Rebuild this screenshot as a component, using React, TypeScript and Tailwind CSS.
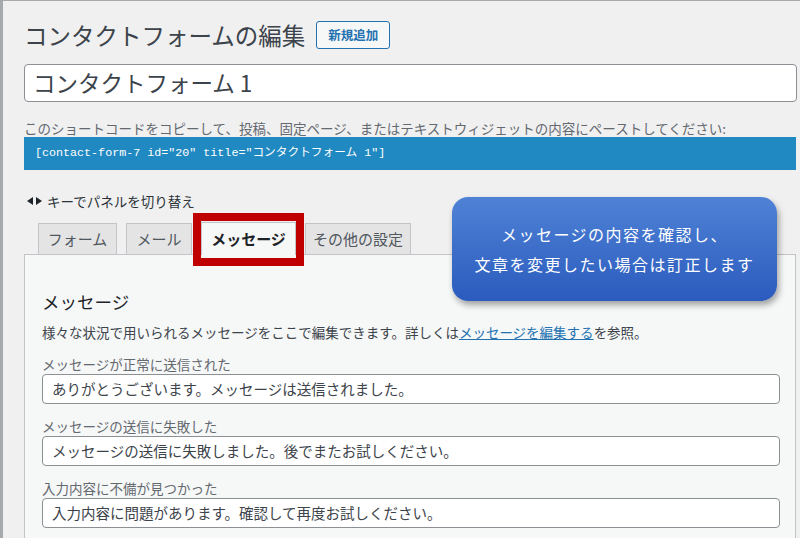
const jp = { fontFamily: '"Noto Sans CJK JP", sans-serif' }

const fields = [
  { label: 'メッセージが正常に送信された', value: 'ありがとうございます。メッセージは送信されました。' },
  { label: 'メッセージの送信に失敗した', value: 'メッセージの送信に失敗しました。後でまたお試しください。' },
  { label: '入力内容に不備が見つかった', value: '入力内容に問題があります。確認して再度お試しください。' },
]

function Tab({ label, w, active }: { label: string; w: string; active?: boolean }) {
  if (active) {
    return (
      <div className={`relative z-10 flex h-[33px] ${w} items-center justify-center border border-b-0 border-[#c3c4c7] bg-[#f6f7f7] text-[15px] font-bold text-[#1d2327]`}>
        メッセージ
        <span className="absolute -left-[9px] -top-[10px] -right-[9px] -bottom-[11px] border-[8px] border-[#c00000]"></span>
      </div>
    )
  }
  return (
    <div className={`flex h-[32px] ${w} items-center justify-center border border-[#c3c4c7] bg-[#e4e4e4] text-[15px] text-[#50575e]`}>
      {label}
    </div>
  )
}

export default function App() {
  return (
    <div className="relative h-[538px] w-[800px] overflow-hidden border-l-[3px] border-t border-[#a7aaad] bg-[#f0f0f1]" style={jp}>
      <div className="pl-[21px] pr-[3px]">
        {/* page title */}
        <div className="flex items-center gap-[11px] pt-[19px]">
          <h1 className="text-[23.5px] leading-[30px] text-[#3c434a]">コンタクトフォームの編集</h1>
          <button className="h-[28px] rounded-[3px] border border-[#2271b1] bg-[#f6f7f7] px-[11px] text-[12.5px] font-bold text-[#2271b1]">
            新規追加
          </button>
        </div>

        <div className="mt-[14px] flex h-[38px] items-center rounded-[4px] border border-[#8c8f94] bg-white pl-[8px] text-[22.5px] text-[#3c434a]">
          コンタクトフォーム 1
        </div>

        <p className="mt-[17px] text-[13.5px] leading-[18px] text-[#646970]">
          このショートコードをコピーして、投稿、固定ページ、またはテキストウィジェットの内容にペーストしてください:
        </p>
        <div
          className="mr-[1px] flex h-[33px] items-center bg-[#2189c1] pl-[11px] text-[11.7px] text-white"
          style={{ fontFamily: '"Liberation Mono", "Noto Sans CJK JP", monospace' }}
        >
          [contact-form-7 id="20" title="コンタクトフォーム 1"]
        </div>

        <div className="mt-[21px] flex h-[20px] items-center gap-[5px] pl-[3px] text-[13.5px] text-[#2c3338]">
          <svg width="15" height="8" viewBox="0 0 15 8">
            <path d="M0 4 L6 0 L6 8 Z M15 4 L9 0 L9 8 Z" fill="#1d2327" />
          </svg>
          <span>キーでパネルを切り替え</span>
        </div>

        {/* tabs */}
        <div className="relative z-10 mt-[11px] -mb-px flex items-end gap-[9px] pl-[14px]">
          <Tab label="フォーム" w="w-[79px]" />
          <Tab label="メール" w="w-[66px]" />
          <Tab label="メッセージ" w="w-[95px]" active />
          <Tab label="その他の設定" w="w-[106px]" />
        </div>

        {/* panel */}
        <div className="mr-[1px] h-[300px] border border-[#c3c4c7] bg-[#f6f7f7] pl-[17px] pr-[15px] pt-[35px]">
          <h2 className="text-[17.5px] leading-[24px] text-[#1d2327]">メッセージ</h2>
          <p className="mt-[8px] text-[13.5px] leading-[20px] text-[#3c434a]">
            様々な状況で用いられるメッセージをここで編集できます。詳しくは
            <span className="text-[#2271b1] underline">メッセージを編集する</span>
            を参照。
          </p>
          <div className="mt-[12px] flex flex-col gap-[12px]">
            {fields.map((f) => (
              <div key={f.label}>
                <div className="text-[13.5px] leading-[20px] text-[#646970]">{f.label}</div>
                <div className="flex h-[30px] items-center rounded-[4px] border border-[#8c8f94] bg-white pl-[9px] text-[14.5px] text-[#3c434a]">
                  {f.value}
                </div>
              </div>
            ))}
          </div>
        </div>
      </div>

      {/* callout */}
      <div className="absolute left-[449px] top-[196px] z-20 flex h-[104px] w-[325px] flex-col items-center justify-center rounded-[16px] bg-gradient-to-b from-[#4f82d6] to-[#2b5bbd] text-[16px] leading-[30px] tracking-[1.5px] text-white shadow-[2px_4px_6px_rgba(0,0,0,0.35)]">
        <div>メッセージの内容を確認し、</div>
        <div>文章を変更したい場合は訂正します</div>
      </div>
    </div>
  )
}
